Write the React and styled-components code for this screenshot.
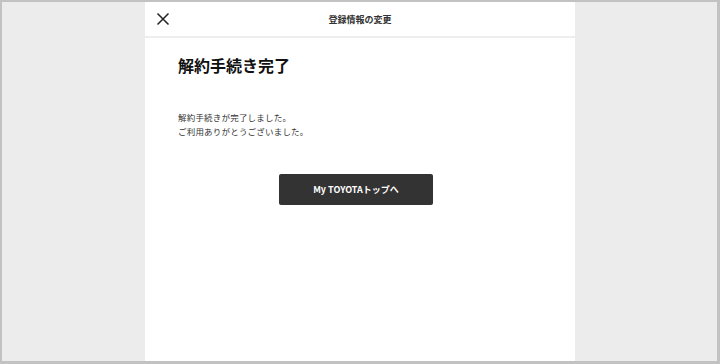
import React from "react";
import styled, { createGlobalStyle } from "styled-components";

const GlobalStyle = createGlobalStyle`
  html, body {
    margin: 0;
    padding: 0;
  }
  body {
    font-family: "Noto Sans CJK JP", "Noto Sans", sans-serif;
    color: #222;
  }
`;

const Frame = styled.div`
  box-sizing: border-box;
  width: 720px;
  height: 364px;
  border: 2px solid #c2c2c2;
  border-right-width: 3px;
  border-bottom-width: 3px;
  background-color: #ececec;
  display: flex;
  padding-left: 143px;
  overflow: hidden;
`;

const Panel = styled.div`
  width: 430px;
  background-color: #fff;
  display: flex;
  flex-direction: column;
`;

const Header = styled.div`
  height: 34px;
  display: grid;
  grid-template-columns: 40px 1fr 40px;
  align-items: center;
  border-bottom: 2px solid #eeeeee;
`;

const CloseButton = styled.button`
  border: none;
  background: none;
  padding: 0;
  margin-left: 11px;
  display: flex;
  align-items: center;
  cursor: pointer;
`;

const HeaderTitle = styled.div`
  text-align: center;
  font-size: 9px;
  font-weight: 700;
  color: #333;
`;

const Content = styled.div`
  padding: 15px 33px 0;
  display: flex;
  flex-direction: column;
`;

const Title = styled.h1`
  margin: 0;
  font-size: 16px;
  font-weight: 700;
  line-height: 24px;
  color: #111;
`;

const Message = styled.p`
  margin: 33px 0 0;
  font-size: 8.5px;
  letter-spacing: 0.2px;
  line-height: 14px;
  color: #333;
`;

const Action = styled.div`
  display: flex;
  justify-content: center;
  margin-top: 36px;
`;

const PrimaryButton = styled.button`
  width: 154px;
  height: 31px;
  margin-right: 8px;
  border: none;
  border-radius: 2px;
  background-color: #333333;
  color: #fff;
  font-family: "Noto Sans CJK JP", "Noto Sans", sans-serif;
  font-size: 9px;
  font-weight: 700;
  cursor: pointer;
`;

const CloseIcon = () => (
  <svg width="14" height="14" viewBox="0 0 14 14">
    <path d="M1.5 1.5 L12.5 12.5 M12.5 1.5 L1.5 12.5" stroke="#222" strokeWidth="1.5" />
  </svg>
);

const App = () => {
  return (
    <>
      <GlobalStyle />
      <Frame>
        <Panel>
          <Header>
            <CloseButton aria-label="閉じる">
              <CloseIcon />
            </CloseButton>
            <HeaderTitle>登録情報の変更</HeaderTitle>
            <span />
          </Header>
          <Content>
            <Title>解約手続き完了</Title>
            <Message>
              解約手続きが完了しました。
              <br />
              ご利用ありがとうございました。
            </Message>
            <Action>
              <PrimaryButton>My TOYOTAトップへ</PrimaryButton>
            </Action>
          </Content>
        </Panel>
      </Frame>
    </>
  );
};

export default App;
